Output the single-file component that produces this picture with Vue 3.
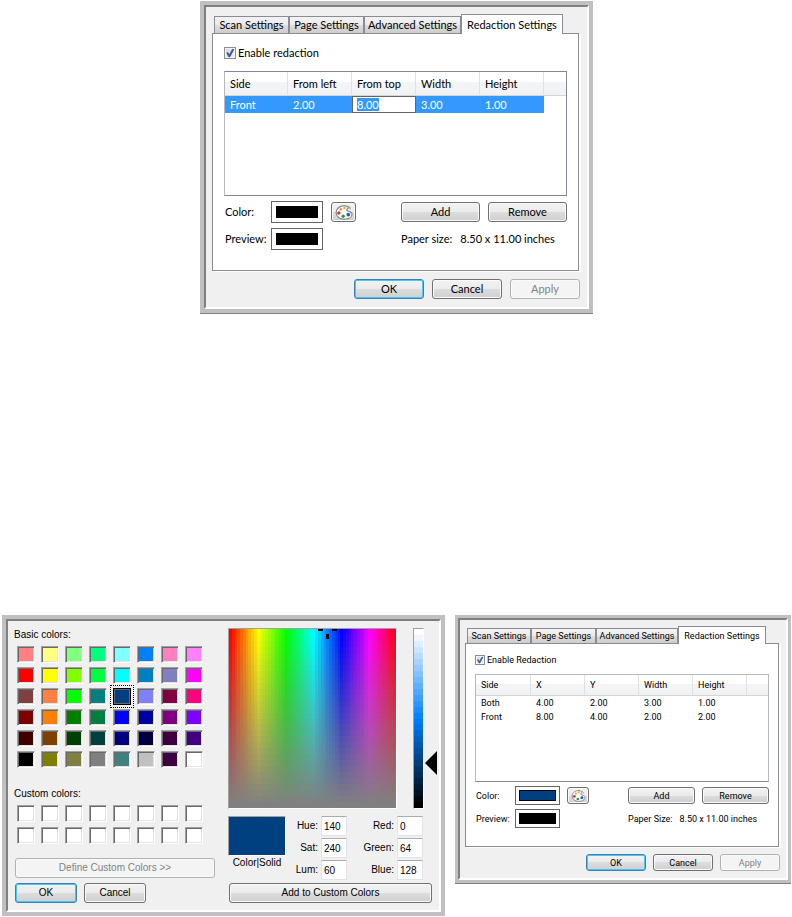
<script setup>
import { computed, nextTick, onMounted, reactive, ref } from 'vue'

const tabs = ['Scan Settings', 'Page Settings', 'Advanced Settings', 'Redaction Settings']

const dialogs = reactive([
  {
    id: 'main',
    checkLabel: 'Enable redaction',
    enabled: true,
    columns: ['Side', 'From left', 'From top', 'Width', 'Height'],
    rows: [['Front', '2.00', '8.00', '3.00', '1.00']],
    selected: 0,
    editing: 2,
    color: '#000000',
    preview: '#000000',
    paper: 'Paper size:',
    size: '8.50 x 11.00 inches'
  },
  {
    id: 'compact',
    checkLabel: 'Enable Redaction',
    enabled: true,
    columns: ['Side', 'X', 'Y', 'Width', 'Height'],
    rows: [
      ['Both', '4.00', '2.00', '3.00', '1.00'],
      ['Front', '8.00', '4.00', '2.00', '2.00']
    ],
    selected: -1,
    editing: -1,
    color: '#004080',
    preview: '#000000',
    paper: 'Paper Size:',
    size: '8.50 x 11.00 inches'
  }
])

const basicColors = [
  '#ff8080', '#ffff80', '#80ff80', '#00ff80', '#80ffff', '#0080ff', '#ff80c0', '#ff80ff',
  '#ff0000', '#ffff00', '#80ff00', '#00ff40', '#00ffff', '#0080c0', '#8080c0', '#ff00ff',
  '#804040', '#ff8040', '#00ff00', '#008080', '#004080', '#8080ff', '#800040', '#ff0080',
  '#800000', '#ff8000', '#008000', '#008040', '#0000ff', '#0000a0', '#800080', '#8000ff',
  '#400000', '#804000', '#004000', '#004040', '#000080', '#000040', '#400040', '#400080',
  '#000000', '#808000', '#808040', '#808080', '#408080', '#c0c0c0', '#400040', '#ffffff'
]
const picked = ref('#004080')

const channels = reactive([
  { id: 'hue', label: 'Hue:', value: '140' },
  { id: 'red', label: 'Red:', value: '0' },
  { id: 'sat', label: 'Sat:', value: '240' },
  { id: 'green', label: 'Green:', value: '64' },
  { id: 'lum', label: 'Lum:', value: '60' },
  { id: 'blue', label: 'Blue:', value: '128' }
])

// Hard-stop gradient, one band per step, like the native picker draws it.
function bands(direction, count, colorAt) {
  const stops = []
  for (let i = 0; i < count; i++) {
    stops.push(`${colorAt(i)} ${(i / count) * 100}% ${((i + 1) / count) * 100}%`)
  }
  return `linear-gradient(${direction}, ${stops.join(', ')})`
}

const spectrum = computed(() => {
  const fade = bands('to bottom', 30, (i) => `rgba(128, 128, 128, ${i / 29})`)
  const hues = bands('to right', 60, (i) => `hsl(${i * 6}, 100%, 50%)`)
  return `${fade}, ${hues}`
})
const luminance = bands('to bottom', 30, (i) => `hsl(210, 100%, ${100 - (i / 29) * 100}%)`)

onMounted(async () => {
  await nextTick()
  const cell = document.querySelector('.cell-edit')
  cell?.focus()
  cell?.select()
})
</script>

<template>
  <main class="page">
    <section v-for="d in dialogs" :key="d.id" class="window settings" :class="d.id">
      <div class="window-body">
        <div class="tabs" role="tablist">
          <button
            v-for="(tab, i) in tabs"
            :key="tab"
            type="button"
            role="tab"
            class="tab"
            :class="{ active: i === 3 }"
            :aria-selected="i === 3"
          >
            {{ tab }}
          </button>
        </div>

        <div class="panel">
          <label class="check">
            <input v-model="d.enabled" type="checkbox" />
            <span>{{ d.checkLabel }}</span>
          </label>

          <div class="list">
            <table>
              <thead>
                <tr>
                  <th v-for="c in d.columns" :key="c">{{ c }}</th>
                  <th class="filler"></th>
                </tr>
              </thead>
              <tbody>
                <tr v-for="(row, r) in d.rows" :key="r" :class="{ selected: r === d.selected }">
                  <td
                    v-for="(cell, c) in row"
                    :key="c"
                    :class="{ editing: r === d.selected && c === d.editing }"
                  >
                    <input
                      v-if="r === d.selected && c === d.editing"
                      v-model="row[c]"
                      class="cell-edit"
                      type="text"
                      :aria-label="d.columns[c]"
                    />
                    <template v-else>{{ cell }}</template>
                  </td>
                  <td class="filler"></td>
                </tr>
              </tbody>
            </table>
          </div>

          <div class="controls">
            <span class="name">Color:</span>
            <span class="well"><i :style="{ background: d.color }"></i></span>
            <button type="button" class="btn palette" aria-label="Choose color">
              <svg viewBox="0 0 16 14" aria-hidden="true">
                <path
                  d="M8.6.7C4.4.4.6 3.3.6 7c0 3.600 3.400 6.300 7.600 6.300 4.300 0 7.300-1.900 7.300-4.600 0-1.700-1.300-2.300-2.700-2.700-1.600-.4-2.400-.7-2.100-1.700.3-.9 1.500-1 1.300-2C11.800 1.300 10.300.8 8.600.7z"
                  fill="#fff"
                  stroke="#777b84"
                />
                <path d="M12 1.500c1.500.6 2 1.500 1.800 2.500" fill="none" stroke="#999" />
                <circle cx="8.500" cy="2.700" r="1.300" fill="#e6b422" />
                <circle cx="5" cy="4" r="1.200" fill="#f58a3c" />
                <circle cx="3.200" cy="7.500" r="1.600" fill="#e8321e" />
                <circle cx="7.200" cy="10.500" r="1.600" fill="#2f9a3c" />
                <circle cx="12" cy="9" r="1.700" fill="#2757b8" />
              </svg>
            </button>
            <span class="actions">
              <button type="button" class="btn">Add</button>
              <button type="button" class="btn">Remove</button>
            </span>
            <span class="name">Preview:</span>
            <span class="well"><i :style="{ background: d.preview }"></i></span>
            <span class="paper"><span>{{ d.paper }}</span><span>{{ d.size }}</span></span>
          </div>
        </div>

        <div class="footer">
          <button type="button" class="btn default">OK</button>
          <button type="button" class="btn">Cancel</button>
          <button type="button" class="btn" disabled>Apply</button>
        </div>
      </div>
    </section>

    <section class="window picker">
      <div class="window-body">
        <div class="picker-left">
          <span class="caption">Basic colors:</span>
          <div class="swatches">
            <button
              v-for="(color, i) in basicColors"
              :key="i"
              type="button"
              class="swatch"
              :class="{ picked: color === picked }"
              :style="{ background: color }"
              :aria-label="color"
              @click="picked = color"
            ></button>
          </div>
          <span class="caption">Custom colors:</span>
          <div class="swatches custom">
            <button
              v-for="n in 16"
              :key="n"
              type="button"
              class="swatch"
              :aria-label="`Custom ${n}`"
            ></button>
          </div>
          <button type="button" class="btn define" disabled>Define Custom Colors &gt;&gt;</button>
          <div class="picker-buttons">
            <button type="button" class="btn default">OK</button>
            <button type="button" class="btn">Cancel</button>
          </div>
        </div>

        <div class="picker-right">
          <div class="fields">
            <div class="spectrum" :style="{ background: spectrum }">
              <svg class="cross" width="20" height="12" viewBox="0 0 20 12" aria-hidden="true">
                <path d="M0 0h5v2H0zM14 0h5v2h-5zM8 5h3v5H8z" />
              </svg>
            </div>
            <div class="luminance" :style="{ background: luminance }">
              <svg class="arrow" width="12" height="24" viewBox="0 0 12 24" aria-hidden="true">
                <path d="M12 0v24L0 12z" />
              </svg>
            </div>
          </div>
          <div class="values">
            <div class="result">
              <div class="solid" :style="{ background: picked }"></div>
              <span>Color|Solid</span>
            </div>
            <div class="channels">
              <template v-for="ch in channels" :key="ch.id">
                <label :for="ch.id">{{ ch.label }}</label>
                <input :id="ch.id" v-model="ch.value" type="text" />
              </template>
            </div>
          </div>
          <button type="button" class="btn add">Add to Custom Colors</button>
        </div>
      </div>
    </section>
  </main>
</template>

<style>
body {
  margin: 0;
  background: #fff;
}
</style>

<style scoped>
.page {
  display: grid;
  grid-template-columns: 443fr 336fr;
  grid-template-areas:
    'main main'
    'picker compact';
  column-gap: 10px;
  row-gap: 302px;
  align-items: start;
  padding: 1px 1px 0 2px;
  color: #000;
  font-family: Lato, 'Liberation Sans', sans-serif;
}

*,
*::before {
  box-sizing: border-box;
}

button,
input {
  margin: 0;
  padding: 0;
  font: inherit;
  color: inherit;
}

.window {
  border: 4px solid #c0c0c0;
  box-shadow: 0 1px 0 #808080;
}

.window-body {
  border: 2px solid;
  border-color: #808080 #fff #fff #808080;
  background: #f0f0f0;
}

.settings {
  --tab-cols: 75px 75px 97px 102px;
  --pad: 11px;
  --check: 12px;
  --line: 14px;
  --list: 125px;
  --head: 24px;
  --row: 17px;
  --first: 63px;
  --col: 64px;
  --well-h: 22px;
  --well-w: 52px;
  --name: 46px;
  --btn-h: 20px;
  --btn-w: 79px;
  --foot-w: 70px;
  --gap: 8px;
  font-size: 11px;
  line-height: 14px;
}

.settings.main {
  grid-area: main;
  justify-self: center;
  width: 100%;
  max-width: 393px;
}

.settings.compact {
  --tab-cols: 64px 65px 82px 88px;
  --pad: 9px;
  --check: 10px;
  --line: 12px;
  --list: 108px;
  --head: 21px;
  --row: 14px;
  --first: 55px;
  --col: 54px;
  --well-h: 19px;
  --well-w: 45px;
  --name: 39px;
  --btn-h: 17px;
  --btn-w: 67px;
  --foot-w: 60px;
  --gap: 7px;
  grid-area: compact;
  border-width: 3px;
  font-family: Roboto, 'Liberation Sans', sans-serif;
  font-size: 9px;
  line-height: 12px;
}

.settings .window-body {
  padding: 7px 8px 8px 6px;
}

.compact .window-body {
  padding: 6px 7px 7px 5px;
}

.tabs {
  display: grid;
  grid-template-columns: var(--tab-cols);
  align-items: end;
  padding-left: 2px;
}

.tab {
  height: calc(var(--line) + 3px);
  border: 1px solid #898c95;
  border-bottom: 0;
  background: linear-gradient(#f3f3f3, #ebebeb 50%, #dddddd 50%, #cdcdcd);
  white-space: nowrap;
}

.tab.active {
  position: relative;
  height: calc(var(--line) + 6px);
  margin-bottom: -1px;
  background: #fff;
}

.panel {
  padding: 12px var(--pad) 20px;
  border: 1px solid #898c95;
  background: #fff;
  box-shadow: 2px 1px 0 #fff;
}

.compact .panel {
  padding: 10px var(--pad) 18px;
}

.check {
  display: flex;
  align-items: center;
  gap: 2px;
  height: var(--line);
}

.check input {
  appearance: none;
  width: var(--check);
  height: var(--check);
  border: 1px solid #8e8f8f;
  background: linear-gradient(135deg, #cfd3da, #f6f6f6);
  box-shadow: inset 0 0 0 1px #f4f4f4;
}

.check input:checked::before {
  content: '';
  display: block;
  width: 100%;
  height: 100%;
  background: #3c57a0;
  clip-path: polygon(12% 48%, 30% 42%, 42% 62%, 74% 8%, 92% 14%, 50% 92%, 36% 92%);
}

.list {
  height: var(--list);
  margin-top: var(--pad);
  border: 1px solid #828790;
  border-left-color: #b5b9c0;
}

.compact .list {
  margin-top: 8px;
  border-top-color: #b5b9c0;
  border-right-color: #b5b9c0;
}

table {
  width: 100%;
  border-spacing: 0;
  table-layout: fixed;
}

th,
td {
  width: var(--col);
  padding: 0 0 0 5px;
  font-weight: normal;
  text-align: left;
  white-space: nowrap;
}

th:first-child {
  width: var(--first);
}

th {
  height: var(--head);
  border-right: 1px solid #dfe1e5;
  border-bottom: 1px solid #d5d5d5;
  background: linear-gradient(#fff 45%, #f4f5f7 45%, #f1f2f4);
}

th.filler,
td.filler {
  width: auto;
  border-right: 0;
}

td {
  height: var(--row);
}

.selected td:not(.filler) {
  background: #3399ff;
  color: #fff;
}

.selected td.editing {
  padding: 0;
  background: #fff;
}

.cell-edit {
  display: block;
  width: 100%;
  height: var(--row);
  padding: 0 4px;
  border: 1px solid #646464;
  outline: 0;
  background: #fff;
  color: #000;
}

.cell-edit::selection {
  background: #3399ff;
  color: #fff;
}

.controls {
  display: grid;
  grid-template-columns: var(--name) var(--well-w) auto 1fr;
  grid-auto-rows: var(--well-h);
  row-gap: 5px;
  align-items: center;
  margin-top: 5px;
  padding-left: 1px;
}

.compact .controls {
  row-gap: 4px;
  margin-top: 4px;
}

.well {
  height: var(--well-h);
  padding: 4px;
  border: 1px solid #646464;
  background: #fff;
}

.compact .well {
  padding: 3px;
}

.well i {
  display: block;
  height: 100%;
  border: 1px solid #000;
}

.btn {
  height: var(--btn-h, 20px);
  border: 1px solid #707070;
  border-radius: 3px;
  background: linear-gradient(#f2f2f2, #ebebeb 50%, #dddddd 50%, #cfcfcf);
  box-shadow: inset 0 0 0 1px #fafafa;
  white-space: nowrap;
}

.btn.default {
  border-color: #3c7fb1;
  box-shadow: inset 0 0 0 1px #48c8f0;
}

.btn:disabled {
  border-color: #adb2b5;
  background: #f4f4f4;
  color: #838383;
}

.palette {
  display: flex;
  align-items: center;
  justify-content: center;
  width: calc(var(--btn-h) + 5px);
  margin-left: var(--gap);
}

.palette svg {
  width: calc(var(--btn-h) - 2px);
  height: calc(var(--btn-h) - 5px);
}

.actions,
.paper {
  display: flex;
  gap: var(--gap);
  justify-self: end;
  width: calc(var(--btn-w) * 2 + var(--gap));
}

.paper {
  grid-column: 3 / 5;
  white-space: nowrap;
}

.actions .btn {
  flex: 1;
}

.footer {
  display: flex;
  justify-content: flex-end;
  gap: var(--gap);
  margin-top: var(--gap);
  margin-right: -1px;
}

.footer .btn {
  width: var(--foot-w);
}

.picker {
  grid-area: picker;
  font-family: 'Liberation Sans', Arial, sans-serif;
  font-size: 10px;
  line-height: 14px;
}

.picker .window-body {
  display: grid;
  grid-template-columns: 201px 1fr;
  column-gap: 13px;
  padding: 7px 7px 7px 6px;
}

.picker-left,
.picker-right {
  display: flex;
  flex-direction: column;
}

.picker-left .caption {
  height: 18px;
}

.swatches {
  display: grid;
  grid-template-columns: repeat(8, 18px);
  grid-auto-rows: 17px;
  gap: 4px 6px;
  margin-bottom: 19px;
  padding-left: 3px;
}

.swatches.custom {
  row-gap: 5px;
  margin-bottom: 14px;
}

.swatch {
  border: 1px solid;
  border-color: #a0a0a0 #fff #fff #a0a0a0;
  background: #fff;
  box-shadow:
    inset 1px 1px 0 #696969,
    inset -1px -1px 0 #e3e3e3;
}

.swatch.picked {
  border-color: #000;
  box-shadow: inset 0 0 0 1px #696969;
  outline: 1px dotted #000;
  outline-offset: 2px;
}

.define {
  margin-left: 1px;
}

.picker-buttons {
  display: flex;
  gap: 7px;
  margin-top: 5px;
  padding-left: 1px;
}

.picker-buttons .btn {
  width: 62px;
}

.fields {
  display: flex;
  gap: 16px;
}

.spectrum,
.luminance {
  position: relative;
  height: 181px;
  border: 1px solid;
  border-color: #a0a0a0 #fff #fff #a0a0a0;
}

.spectrum {
  flex: 1;
}

.luminance {
  width: 11px;
  margin-right: 8px;
}

/* Markers sit at hue 140 / sat 240 on the field and lum 60 on the bar. */
.cross {
  position: absolute;
  top: 0;
  left: 53%;
}

.arrow {
  position: absolute;
  top: 75%;
  left: 11px;
  margin-top: -12px;
}

.values {
  display: flex;
  gap: 8px;
  margin-top: 7px;
}

.result {
  width: 58px;
  text-align: center;
}

.solid {
  height: 40px;
  border: 1px solid;
  border-color: #a0a0a0 #fff #fff #a0a0a0;
}

.channels {
  display: grid;
  flex: 1;
  grid-template-columns: 24px 26px 1fr 26px;
  gap: 2px 3px;
  align-items: center;
  margin-right: 9px;
  text-align: right;
}

.channels input {
  width: 26px;
  height: 20px;
  padding: 0 2px;
  border: 1px solid #e2e3ea;
  border-top-color: #abadb3;
  background: #fff;
}

.add {
  margin-top: auto;
  margin-left: 1px;
}
</style>
